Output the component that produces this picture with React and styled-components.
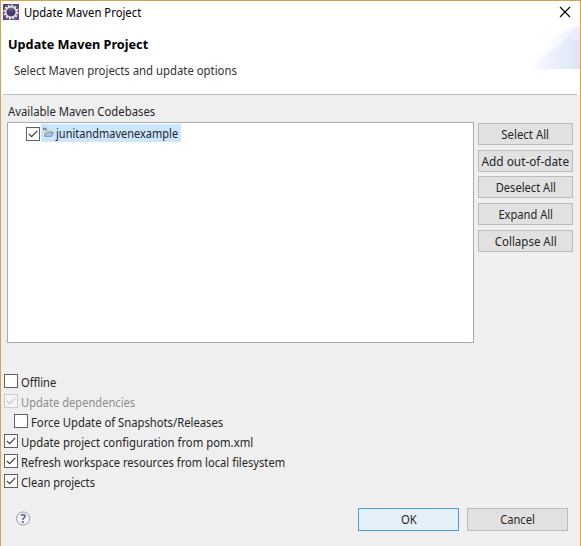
import React from "react";
import styled, { createGlobalStyle } from "styled-components";

const GlobalStyle = createGlobalStyle`
  * { box-sizing: border-box; }
  body { margin: 0; background: #efefef; overflow: hidden; }
`;

const Dialog = styled.main`
  width: 581px;
  height: 546px;
  display: flex;
  flex-direction: column;
  border: solid #dfa04b;
  border-width: 1px 1px 0;
  background: #efefef;
  color: #262626;
  font: 12.5px/20px "Noto Sans", "Open Sans", sans-serif;
`;

const Label = styled.span`
  display: inline-block;
  white-space: nowrap;
  transform: scaleX(${(p) => p.$fit || 1});
  transform-origin: ${(p) => (p.$centered ? "center" : "left")};
`;

const TitleBar = styled.header`
  height: 24px;
  flex: none;
  display: flex;
  align-items: center;
  padding: 0 9px 0 2px;
  gap: 5px;
  background: #fff;
  color: #000;
  font-size: 12px;
  svg { margin-top: -2px; }
  svg:last-child { margin-left: auto; }
`;

const Banner = styled.section`
  height: 70px;
  flex: none;
  display: flex;
  justify-content: space-between;
  background: #fff;
`;

const BannerText = styled.div`
  padding: 9px 0 0 7px;
`;

const Heading = styled.h1`
  margin: 0;
  font-size: 12.7px;
  line-height: 20px;
  font-weight: 700;
  color: #000;
`;

const Description = styled.p`
  margin: 7px 0 0 6px;
  line-height: 20px;
  color: #333;
`;

const Rule = styled.div`
  height: 1px;
  flex: none;
  margin: -1px 3px 0 2px;
  background: #bdbdbd;
`;

const ListLabel = styled.div`
  height: 27px;
  flex: none;
  padding: 7px 0 0 7px;
`;

const ListArea = styled.div`
  height: 221px;
  flex: none;
  display: flex;
  gap: 4px;
  padding-left: 6px;
`;

const Tree = styled.div`
  width: 467px;
  height: 221px;
  border: 1px solid #a9abb4;
  background: #fff;
`;

const TreeRow = styled.div`
  height: 18px;
  display: flex;
  align-items: center;
  margin: 1px 0 0 18px;
  gap: 1px;
`;

const Selected = styled.div`
  height: 18px;
  width: 140px;
  display: flex;
  align-items: center;
  gap: 2px;
  padding: 2px 0 0 2px;
  background: #cce6ff;
  svg { flex: none; margin-bottom: 4px; }
`;

const ButtonColumn = styled.div`
  display: flex;
  flex-direction: column;
  gap: 4.7px;
  padding-top: 1px;
`;

const Button = styled.button`
  width: ${(p) => p.$width}px;
  height: ${(p) => p.$height}px;
  flex: none;
  display: flex;
  align-items: center;
  justify-content: center;
  padding: ${(p) => (p.$height < 23 ? "2px 0 0" : "0")};
  border: 1px solid ${(p) => (p.$primary ? "#479fe0" : "#bcbcbc")};
  background: ${(p) => (p.$primary ? "#e4f0fa" : "#e1e1e1")};
  color: inherit;
  font: inherit;
`;

const Options = styled.div`
  padding: 30px 0 0 3px;
`;

const Option = styled.label`
  height: 20px;
  display: flex;
  align-items: center;
  gap: 3px;
  margin-left: ${(p) => (p.$nested ? 10 : 0)}px;
  color: ${(p) => (p.$disabled ? "#8d8d8d" : "inherit")};
`;

const Box = styled.span`
  width: 14px;
  height: 14px;
  flex: none;
  display: flex;
  margin: ${(p) => (p.$inTree ? "2px 0 0" : "0 0 4px")};
  border: 1px solid ${(p) => (p.$disabled ? "#cfcfcf" : "#606060")};
  background: ${(p) => (p.$disabled ? "#f3f3f3" : "#fff")};
  color: ${(p) => (p.$disabled ? "#c8c8c8" : "#3a3a3a")};
`;

const Footer = styled.footer`
  display: flex;
  align-items: flex-start;
  padding: 15px 12px 0 15px;
  gap: 8px;
  svg { margin: 3px auto 0 0; }
`;

function Check({ checked, disabled, inTree }) {
  return (
    <Box $disabled={disabled} $inTree={inTree}>
      {checked && (
        <svg width="12" height="12" viewBox="0 0 12 12" fill="none" stroke="currentColor" strokeWidth="1.2">
          <path d="M1.8 5.8 4.6 8.6 10.3 2.9" />
        </svg>
      )}
    </Box>
  );
}

function EclipseIcon() {
  return (
    <svg width="16" height="16" viewBox="0 0 16 16">
      <defs>
        <linearGradient id="tile" x1="0" y1="0" x2="1" y2="1">
          <stop offset="0" stopColor="#4a4260" />
          <stop offset="1" stopColor="#6b4698" />
        </linearGradient>
        <linearGradient id="orb" x1="0" y1="0" x2="0" y2="1">
          <stop offset="0" stopColor="#8d84a4" />
          <stop offset=".5" stopColor="#342c56" />
          <stop offset="1" stopColor="#5a4b80" />
        </linearGradient>
      </defs>
      <path d="M0 0h16v16H0z" fill="url(#tile)" />
      <circle cx="8" cy="8" r="6.6" fill="none" stroke="#e8e6ec" strokeWidth="1.8" strokeDasharray="2.05 1.4" />
      <circle cx="8" cy="8" r="5.3" fill="url(#orb)" stroke="#efedf2" strokeWidth="1.4" />
      <path d="M4.2 7.2h7.6M4.2 9h7.6" stroke="#71688e" strokeWidth=".5" />
    </svg>
  );
}

function CloseIcon() {
  return (
    <svg width="12" height="12" viewBox="0 0 12 12" stroke="#000" strokeWidth="1.1">
      <path d="M1 1 11 11M11 1 1 11" />
    </svg>
  );
}

function BannerArt() {
  return (
    <svg width="50" height="44" viewBox="0 0 50 44">
      <defs>
        <linearGradient id="haze">
          <stop offset="0" stopColor="#fff" />
          <stop offset="1" stopColor="#eff3fc" />
        </linearGradient>
        <linearGradient id="hill">
          <stop offset="0" stopColor="#f8faff" />
          <stop offset="1" stopColor="#dce5f6" />
        </linearGradient>
      </defs>
      <path d="M2 44C12 21 29 5 50 0v44z" fill="url(#haze)" />
      <path d="M31 20C36 11 41 4 50 1v19z" fill="#e9effa" />
      <path d="M2 44C15 27 30 17 50 14v30z" fill="url(#hill)" />
    </svg>
  );
}

function FolderIcon() {
  return (
    <svg width="11" height="11" viewBox="0 0 11 11">
      <path d="M2 9V3.2h2.5l1 1H9V9z" fill="#f5dda0" stroke="#a99a76" strokeWidth=".7" />
      <path d="M1.5 9.2 4 5.8h6.5L8.3 9.2z" fill="#b4d2f3" stroke="#4b7fb9" strokeWidth=".8" />
      <path d="M.5 3V.8L1.8 2.2 3 .8V3" fill="none" stroke="#3e699f" strokeWidth=".9" />
    </svg>
  );
}

const Mark = styled.text`
  font: 700 12px "Noto Sans", sans-serif;
  fill: #586891;
`;

function HelpIcon() {
  return (
    <svg width="15" height="15" viewBox="0 0 15 15">
      <circle cx="7.1" cy="7.5" r="6.5" fill="#f3f5f8" stroke="#8b9bb5" strokeWidth="1" />
      <Mark x="7.1" y="11.8" textAnchor="middle">?</Mark>
    </svg>
  );
}

const actions = [
  ["Select All", 0.91],
  ["Add out-of-date", 0.945],
  ["Deselect All", 0.89],
  ["Expand All", 0.89],
  ["Collapse All", 0.92],
];

const options = [
  { text: "Offline", fit: 0.89 },
  { text: "Update dependencies", fit: 0.89, checked: true, disabled: true },
  { text: "Force Update of Snapshots/Releases", fit: 0.9, nested: true },
  { text: "Update project configuration from pom.xml", fit: 0.905, checked: true },
  { text: "Refresh workspace resources from local filesystem", fit: 0.892, checked: true },
  { text: "Clean projects", fit: 0.89, checked: true },
];

export default function App() {
  return (
    <>
      <GlobalStyle />
      <Dialog>
        <TitleBar>
          <EclipseIcon />
          <Label $fit={0.94}>Update Maven Project</Label>
          <CloseIcon />
        </TitleBar>
        <Banner>
          <BannerText>
            <Heading><Label $fit={1}>Update Maven Project</Label></Heading>
            <Description><Label $fit={0.907}>Select Maven projects and update options</Label></Description>
          </BannerText>
          <BannerArt />
        </Banner>
        <Rule />
        <ListLabel><Label $fit={0.905}>Available Maven Codebases</Label></ListLabel>
        <ListArea>
          <Tree>
            <TreeRow>
              <Check checked inTree />
              <Selected>
                <FolderIcon />
                <Label $fit={0.88}>junitandmavenexample</Label>
              </Selected>
            </TreeRow>
          </Tree>
          <ButtonColumn>
            {actions.map(([text, fit]) => (
              <Button key={text} $width={95} $height={22}><Label $centered $fit={fit}>{text}</Label></Button>
            ))}
          </ButtonColumn>
        </ListArea>
        <Options>
          {options.map((o) => (
            <Option key={o.text} $nested={o.nested} $disabled={o.disabled}>
              <Check checked={o.checked} disabled={o.disabled} />
              <Label $fit={o.fit}>{o.text}</Label>
            </Option>
          ))}
        </Options>
        <Footer>
          <HelpIcon />
          <Button $width={101} $height={23} $primary><Label $centered $fit={0.9}>OK</Label></Button>
          <Button $width={101} $height={23}><Label $centered $fit={0.89}>Cancel</Label></Button>
        </Footer>
      </Dialog>
    </>
  );
}
